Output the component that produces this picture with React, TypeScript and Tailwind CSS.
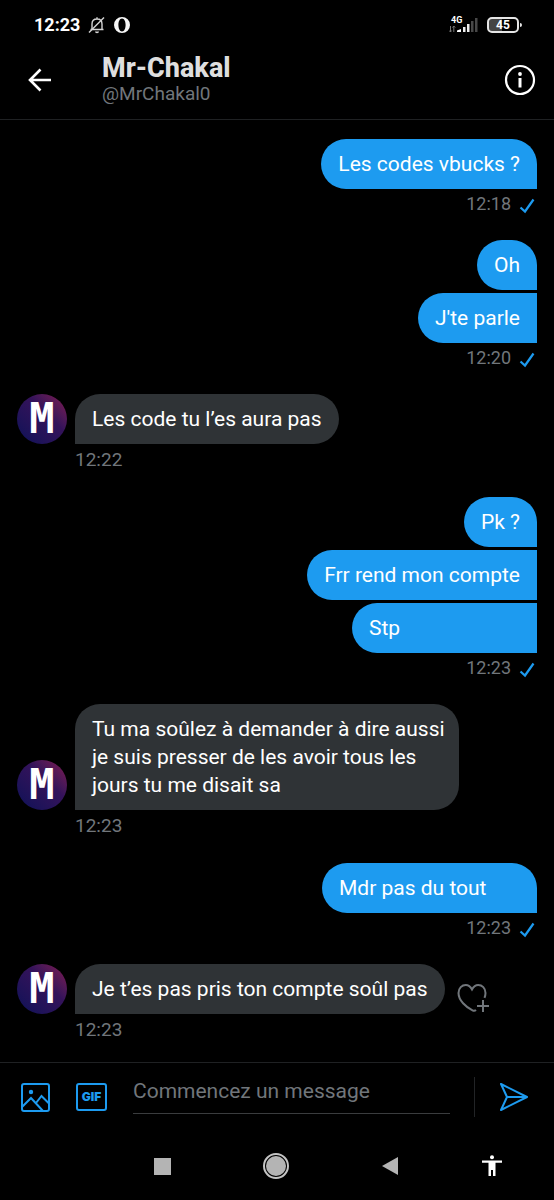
type Message = {
  text: string;
  width?: string;
};

type Group = {
  from: "me" | "them";
  time: string;
  messages: Message[];
  canReact?: boolean;
};

const groups: Group[] = [
  { from: "me", time: "12:18", messages: [{ text: "Les codes vbucks ?", width: "min-w-[215px]" }] },
  { from: "me", time: "12:20", messages: [{ text: "Oh" }, { text: "J'te parle" }] },
  { from: "them", time: "12:22", messages: [{ text: "Les code tu l’es aura pas" }] },
  {
    from: "me",
    time: "12:23",
    messages: [
      { text: "Pk ?" },
      { text: "Frr rend mon compte" },
      { text: "Stp", width: "min-w-[185px]" },
    ],
  },
  {
    from: "them",
    time: "12:23",
    messages: [
      {
        text: "Tu ma soûlez à demander à dire aussi je suis presser de les avoir tous les jours tu me disait sa",
        width: "max-w-[384px] pr-3",
      },
    ],
  },
  { from: "me", time: "12:23", messages: [{ text: "Mdr pas du tout", width: "min-w-[215px]" }] },
  {
    from: "them",
    time: "12:23",
    messages: [{ text: "Je t’es pas pris ton compte soûl pas" }],
    canReact: true,
  },
];

const StatusBar = () => (
  <div className="flex h-[50px] items-center pl-[34px] pr-8">
    <span className="text-lg font-bold">12:23</span>
    <svg className="ml-2" width="18" height="18" viewBox="0 0 18 18" fill="none" stroke="#d4d4d4" strokeWidth="1.4">
      <path d="M4 13.5V8c0-3 2-5 5-5s5 2 5 5v5.5M2.5 13.5h13M9 1.2V3" />
      <path d="M7 15.5h4c0 1-.9 1.7-2 1.7s-2-.7-2-1.7z" fill="#d4d4d4" stroke="none" />
      <path d="M1 16.5 16 1.5" />
    </svg>
    <svg className="ml-2" width="16" height="16" viewBox="0 0 16 16">
      <path
        fill="#f5f5f5"
        fillRule="evenodd"
        d="M8 0a8 8 0 1 0 0 16A8 8 0 0 0 8 0zm0 1.500c2.200 0 3.600 2.900 3.600 6.500S10.200 14.500 8 14.500 4.400 11.600 4.400 8 5.800 1.500 8 1.500z"
      />
    </svg>
    <div className="ml-auto flex items-center gap-2">
      <div className="relative h-[18px] w-[30px]">
        <span className="absolute left-0.5 top-0 text-[9px] font-bold leading-[8px]">4G</span>
        <svg width="30" height="18" viewBox="0 0 30 18">
          <path d="M1.500 10v6M0 14.500l1.500 1.500 1.200-1.500M4.800 16v-6M3.500 11.500 4.800 10l1.400 1.500" fill="none" stroke="#777" />
          <path d="M8 16v-1.500l4-1.500v3z" fill="#fff" />
          <path d="M14 11h2.500v5H14zM18 8h2.500v8H18z" fill="#eee" />
          <path d="M22 5h2.500v11H22zM26 2h2.500v14H26z" fill="#484848" />
        </svg>
      </div>
      <div className="flex items-center gap-px">
        <div className="flex h-4 w-8 items-center rounded-[5px] border-2 border-[#e5e5e5] bg-linear-to-r from-[#444] from-45% to-black to-45%">
          <span className="w-full text-center text-xs font-bold">45</span>
        </div>
        <div className="h-1 w-0.5 rounded-r bg-[#e5e5e5]" />
      </div>
    </div>
  </div>
);

const Header = () => (
  <header className="flex h-[70px] items-center border-b border-[#1f2123] pb-2.5 pl-7 pr-[18px]">
    <button aria-label="Retour">
      <svg width="24" height="24" viewBox="0 0 24 24" fill="none" stroke="#fff" strokeWidth="2.600">
        <path d="M23 12H2M12.500 1.500 2 12l10.500 10.500" />
      </svg>
    </button>
    <div className="ml-[50px] flex-1">
      <h1 className="text-[27px] font-extrabold leading-7 text-[#dedede]">Mr-Chakal</h1>
      <p className="text-[19px] leading-6 text-[#71767b]">@MrChakal0</p>
    </div>
    <button aria-label="Informations">
      <svg width="32" height="32" viewBox="0 0 32 32" fill="none" stroke="#fff">
        <circle cx="16" cy="16" r="14" strokeWidth="2.200" />
        <path d="M16 14v9.500" strokeWidth="3" />
        <circle cx="16" cy="10" r="1.900" fill="#fff" stroke="none" />
      </svg>
    </button>
  </header>
);

const Avatar = () => (
  <div className="flex size-[50px] shrink-0 items-center justify-center rounded-full bg-linear-to-tr from-[#0a1158] via-[#34125a] via-60% to-[#86104e]">
    <span className="font-['DejaVu_Sans_Mono',monospace] text-[42px] font-bold leading-none">M</span>
  </div>
);

const SentGroup = ({ group }: { group: Group }) => (
  <div className="flex flex-col items-end">
    <div className="flex flex-col items-end gap-[3px]">
      {group.messages.map((message, i) => (
        <p
          key={message.text}
          className={`rounded-l-[25px] bg-[#1d9bf0] px-[17px] py-[11px] ${i === 0 ? "rounded-tr-[25px]" : ""} ${message.width ?? ""}`}
        >
          {message.text}
        </p>
      ))}
    </div>
    <div className="flex items-center gap-2 pr-0.5">
      <time className="text-lg leading-[30px] text-[#71767b]">{group.time}</time>
      <svg className="mt-1" width="16" height="16" viewBox="0 0 16 16" fill="none" stroke="#1d9bf0" strokeWidth="2.200">
        <path d="M1.500 9.500 6 13.500 14.500 1.500" />
      </svg>
    </div>
  </div>
);

const ReceivedGroup = ({ group }: { group: Group }) => (
  <div>
    <div className="flex items-end gap-2">
      <Avatar />
      {group.messages.map((message) => (
        <p
          key={message.text}
          className={`rounded-t-[25px] rounded-br-[25px] bg-[#2f3336] px-[17px] py-[11px] ${message.width ?? ""}`}
        >
          {message.text}
        </p>
      ))}
      {group.canReact && (
        <button aria-label="Réagir" className="ml-1">
          <svg width="32" height="32" viewBox="0 0 32 32" fill="none" stroke="#71767b" strokeWidth="2">
            <path d="M19 28c-1 .9-2.200 1-3.500.3C9 25 1.500 18.500 1.500 11 1.500 6 5 3 8.800 3c2.700 0 4.700 1.700 6.200 4.500C16.500 4.700 18.500 3 21.200 3 25 3 28.500 6 28.500 11c0 1.800-.4 3.300-1 4.800" />
            <path d="M26 18v12M20 24h12" />
          </svg>
        </button>
      )}
    </div>
    <time className="ml-[58px] block text-[19px] leading-8 text-[#71767b]">{group.time}</time>
  </div>
);

const Composer = () => (
  <form
    className="flex h-[70px] items-center border-t border-[#1f2123] pb-0.5 pl-5 pr-[25px]"
    onSubmit={(e) => e.preventDefault()}
  >
    <button type="button" aria-label="Ajouter une image">
      <svg width="30" height="30" viewBox="0 0 30 30" fill="none" stroke="#1d9bf0" strokeWidth="2">
        <rect x="2" y="2" width="27" height="27" rx="2" />
        <path d="M2 25 11 16l12 13M16 21l5.500-7L29 21.500" />
        <circle cx="11" cy="10" r="2.200" fill="#1d9bf0" stroke="none" />
      </svg>
    </button>
    <button
      type="button"
      className="ml-[26px] h-7 w-[31px] rounded-[3px] border-2 border-[#1d9bf0] font-['Inter',sans-serif] text-xs font-black leading-6 text-[#1d9bf0]"
    >
      GIF
    </button>
    <input
      type="text"
      aria-label="Message"
      placeholder="Commencez un message"
      className="ml-[26px] h-[34px] min-w-0 flex-1 border-b border-[#3a3c3e] pb-2.5 text-[21px] outline-none placeholder:text-[#71767b]"
    />
    <div className="ml-6 h-10 w-px bg-[#222426]" />
    <button type="submit" aria-label="Envoyer" className="ml-6">
      <svg width="30" height="30" viewBox="0 0 30 30" fill="none" stroke="#1d9bf0" strokeWidth="2" strokeLinejoin="round">
        <path d="M2 2 28 15 2 28l6-13zM8 15h20" />
      </svg>
    </button>
  </form>
);

const SystemNav = () => (
  <nav className="flex h-[68px] items-center pl-[149px] pr-[49px]">
    <div className="flex flex-1 justify-between">
      <button aria-label="Applications récentes" className="flex size-[26px] items-center justify-center">
        <span className="size-[17px] bg-[#b4b4b4]" />
      </button>
      <button aria-label="Accueil" className="flex size-[26px] items-center justify-center rounded-full border-2 border-[#c4c4c4]">
        <span className="size-5 rounded-full bg-[#b4b4b4]" />
      </button>
      <button aria-label="Précédent" className="flex size-[26px] items-center justify-center">
        <svg width="18" height="18" viewBox="0 0 18 18" fill="#b4b4b4">
          <path d="M17 0v18L1 9z" />
        </svg>
      </button>
    </div>
    <button aria-label="Accessibilité" className="ml-[76px] flex size-[26px] items-center justify-center">
      <svg width="20" height="22" viewBox="0 0 20 22" fill="#fff">
        <circle cx="10" cy="2.200" r="2" />
        <path d="M0 5.500h20v2.300h-6.500V21H11v-6H9v6H6.500V7.800H0z" />
      </svg>
    </button>
  </nav>
);

export default function App() {
  return (
    <div className="flex min-h-screen flex-col bg-black font-['Roboto',sans-serif] text-white">
      <StatusBar />
      <Header />
      <main className="flex flex-1 flex-col gap-[21px] px-[17px] pb-4 pt-[19px] text-[21px] leading-7">
        {groups.map((group, i) =>
          group.from === "me" ? <SentGroup key={i} group={group} /> : <ReceivedGroup key={i} group={group} />
        )}
      </main>
      <Composer />
      <SystemNav />
    </div>
  );
}
